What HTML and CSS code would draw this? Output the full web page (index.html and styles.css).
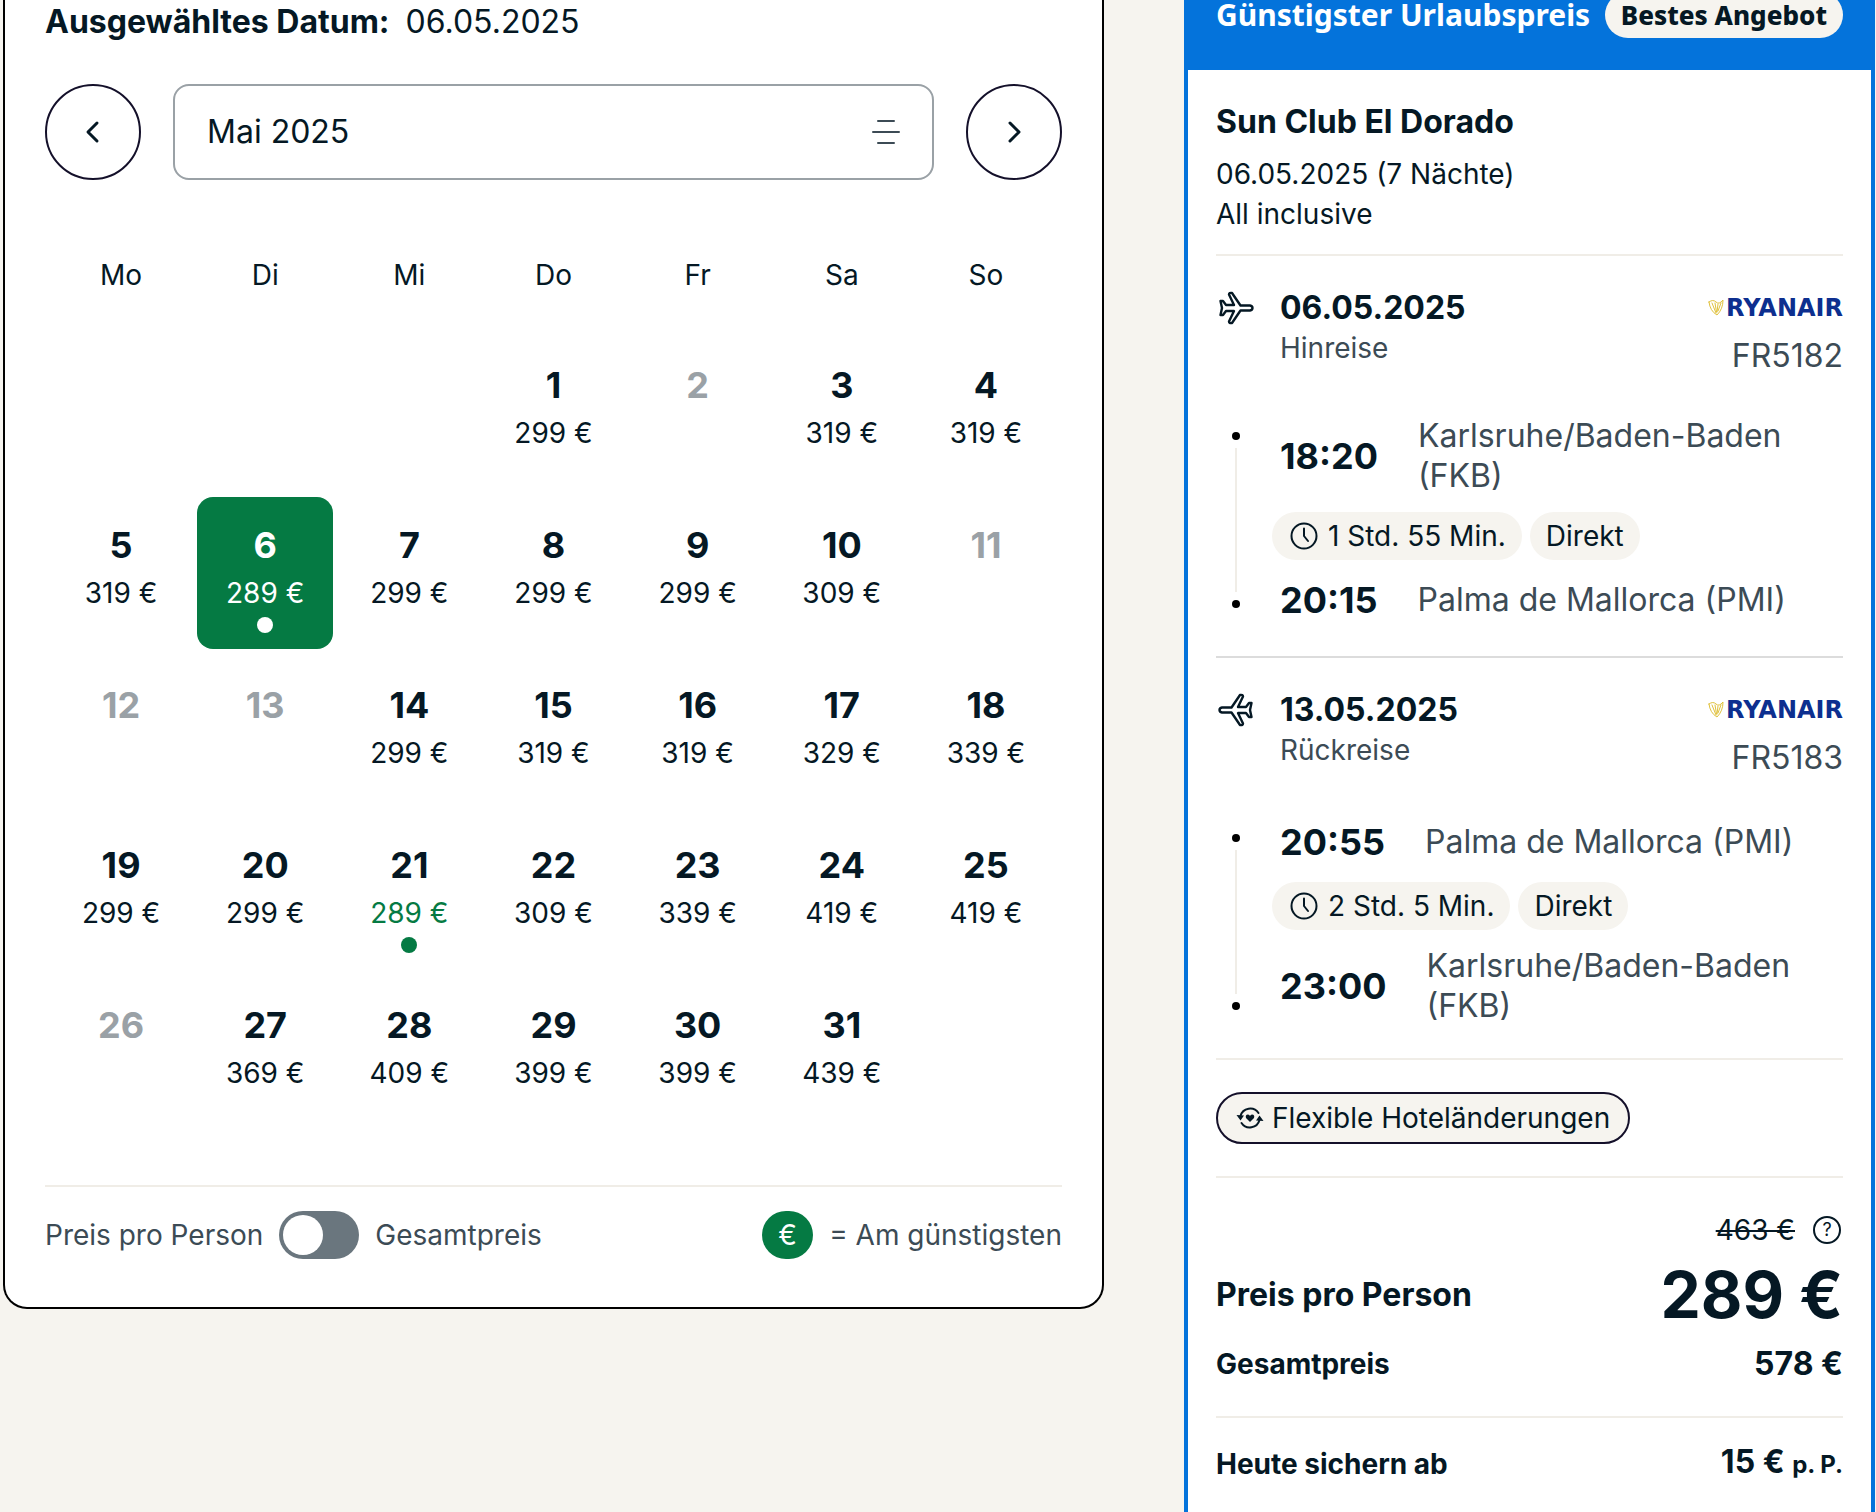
FILE: index.html
```html
<!DOCTYPE html>
<html lang="de">
<head>
<meta charset="utf-8">
<title>Reisedatum und Urlaubspreis</title>
<meta name="viewport" content="width=device-width, initial-scale=1">
<link rel="stylesheet" href="styles.css">
</head>
<body>
<svg class="sprite" aria-hidden="true">
  <symbol id="plane" viewBox="0 0 36 36">
    <path stroke-width="2.4" d="M2.500 11H5l3 4h8L11 4.500q0-2 3-1.500l8.500 12.500H32q2.500 .5 2.500 2.500T32 20.500h-9.500L14 33q-3 .5-3-1.500L16 21H8l-3 4H2.500L4 18z"/>
  </symbol>
  <symbol id="clock" viewBox="0 0 28 28">
    <circle cx="14" cy="14" r="12.500"/><path d="M14 6.500V14l4 5"/>
  </symbol>
  <symbol id="harp" viewBox="0 0 16 18">
    <path d="M1 3q4-3 7 0t7-2q0 9-6 15-7-4-8-13zM4 4l4 10M7 4l1.500 9M10 5l-1 8M13 4l-3 8"/>
  </symbol>
</svg>
<main class="page">
  <section class="calendar">
    <p class="chosen"><strong>Ausgewähltes Datum:</strong><span>06.05.2025</span></p>
    <div class="months">
      <button class="round" type="button" aria-label="Vorheriger Monat"><svg viewBox="0 0 24 24"><path d="M16 3L7 12l9 9"/></svg></button>
      <div class="picker">
        <select class="month" aria-label="Monat"><option>Mai 2025</option></select>
        <svg class="lines" viewBox="0 0 28 28" aria-hidden="true"><path d="M6 3h16M1 14h26M6 25h16"/></svg>
      </div>
      <button class="round" type="button" aria-label="Nächster Monat"><svg viewBox="0 0 24 24"><path d="M8 3l9 9-9 9"/></svg></button>
    </div>
    <table class="days">
      <thead><tr><th>Mo</th><th>Di</th><th>Mi</th><th>Do</th><th>Fr</th><th>Sa</th><th>So</th></tr></thead>
      <tbody>
        <tr><td></td><td></td><td></td>
          <td><button class="day" type="button"><b>1</b><span>299 €</span></button></td>
          <td><button class="day" type="button" disabled><b>2</b></button></td>
          <td><button class="day" type="button"><b>3</b><span>319 €</span></button></td>
          <td><button class="day" type="button"><b>4</b><span>319 €</span></button></td></tr>
        <tr>
          <td><button class="day" type="button"><b>5</b><span>319 €</span></button></td>
          <td><button class="day cheap selected" type="button" aria-pressed="true"><b>6</b><span>289 €</span></button></td>
          <td><button class="day" type="button"><b>7</b><span>299 €</span></button></td>
          <td><button class="day" type="button"><b>8</b><span>299 €</span></button></td>
          <td><button class="day" type="button"><b>9</b><span>299 €</span></button></td>
          <td><button class="day" type="button"><b>10</b><span>309 €</span></button></td>
          <td><button class="day" type="button" disabled><b>11</b></button></td></tr>
        <tr>
          <td><button class="day" type="button" disabled><b>12</b></button></td>
          <td><button class="day" type="button" disabled><b>13</b></button></td>
          <td><button class="day" type="button"><b>14</b><span>299 €</span></button></td>
          <td><button class="day" type="button"><b>15</b><span>319 €</span></button></td>
          <td><button class="day" type="button"><b>16</b><span>319 €</span></button></td>
          <td><button class="day" type="button"><b>17</b><span>329 €</span></button></td>
          <td><button class="day" type="button"><b>18</b><span>339 €</span></button></td></tr>
        <tr>
          <td><button class="day" type="button"><b>19</b><span>299 €</span></button></td>
          <td><button class="day" type="button"><b>20</b><span>299 €</span></button></td>
          <td><button class="day cheap" type="button"><b>21</b><span>289 €</span></button></td>
          <td><button class="day" type="button"><b>22</b><span>309 €</span></button></td>
          <td><button class="day" type="button"><b>23</b><span>339 €</span></button></td>
          <td><button class="day" type="button"><b>24</b><span>419 €</span></button></td>
          <td><button class="day" type="button"><b>25</b><span>419 €</span></button></td></tr>
        <tr>
          <td><button class="day" type="button" disabled><b>26</b></button></td>
          <td><button class="day" type="button"><b>27</b><span>369 €</span></button></td>
          <td><button class="day" type="button"><b>28</b><span>409 €</span></button></td>
          <td><button class="day" type="button"><b>29</b><span>399 €</span></button></td>
          <td><button class="day" type="button"><b>30</b><span>399 €</span></button></td>
          <td><button class="day" type="button"><b>31</b><span>439 €</span></button></td>
          <td></td></tr>
      </tbody>
    </table>
    <div class="legend">
      <div class="mode">
        <label for="total">Preis pro Person</label>
        <input class="switch" id="total" type="checkbox" role="switch">
        <label for="total">Gesamtpreis</label>
      </div>
      <div class="best"><span class="euro">€</span><span>= Am günstigsten</span></div>
    </div>
  </section>

  <aside class="offer">
    <header class="banner"><h2>Günstigster Urlaubspreis</h2><span class="badge">Bestes Angebot</span></header>
    <div class="body">
      <section class="hotel">
        <h3>Sun Club El Dorado</h3>
        <p>06.05.2025 (7 Nächte)</p>
        <p>All inclusive</p>
      </section>
      <section class="flight">
        <div class="top">
          <svg class="plane" aria-hidden="true"><use href="#plane"/></svg>
          <div class="when"><strong>06.05.2025</strong><span>Hinreise</span></div>
          <div class="carrier"><span class="logo"><svg class="harp" aria-hidden="true"><use href="#harp"/></svg>RYANAIR</span><span>FR5182</span></div>
        </div>
        <div class="route">
          <div class="track"><i></i><i></i></div>
          <div class="stops">
            <div class="stop"><strong>18:20</strong><span>Karlsruhe/Baden-Baden (FKB)</span></div>
            <div class="tags"><span class="tag timed"><svg class="clock" aria-hidden="true"><use href="#clock"/></svg>1 Std. 55 Min.</span><span class="tag">Direkt</span></div>
            <div class="stop"><strong>20:15</strong><span>Palma de Mallorca (PMI)</span></div>
          </div>
        </div>
      </section>
      <section class="flight back">
        <div class="top">
          <svg class="plane" aria-hidden="true"><use href="#plane"/></svg>
          <div class="when"><strong>13.05.2025</strong><span>Rückreise</span></div>
          <div class="carrier"><span class="logo"><svg class="harp" aria-hidden="true"><use href="#harp"/></svg>RYANAIR</span><span>FR5183</span></div>
        </div>
        <div class="route">
          <div class="track"><i></i><i></i></div>
          <div class="stops">
            <div class="stop"><strong>20:55</strong><span>Palma de Mallorca (PMI)</span></div>
            <div class="tags"><span class="tag timed"><svg class="clock" aria-hidden="true"><use href="#clock"/></svg>2 Std. 5 Min.</span><span class="tag">Direkt</span></div>
            <div class="stop"><strong>23:00</strong><span>Karlsruhe/Baden-Baden (FKB)</span></div>
          </div>
        </div>
      </section>
      <section class="perks">
        <button class="flex" type="button"><svg viewBox="0 0 28 28" aria-hidden="true"><path class="stroke" d="M4.500 12a10 10 0 0 1 18-3M23.500 16a10 10 0 0 1-18 3"/><path d="M.5 11l7.500 .5L4.500 16.500zM27.500 17l-7.500-.5L23.500 11.500zM14 18l-4-4q-1-3.500 2-3.500 1.500 0 2 1.500 .5-1.500 2-1.500 3 0 2 3.500z"/></svg>Flexible Hoteländerungen</button>
      </section>
      <section class="prices">
        <div class="old"><s>463 €</s><button class="help" type="button" aria-label="Hilfe zum Preis">?</button></div>
        <div class="line main"><span>Preis pro Person</span><strong>289 €</strong></div>
        <div class="line"><span>Gesamtpreis</span><strong>578 €</strong></div>
      </section>
      <section class="deposit">
        <div class="line"><span>Heute sichern ab</span><strong>15 € <small>p. P.</small></strong></div>
      </section>
    </div>
  </aside>
</main>
</body>
</html>
```
FILE: styles.css
```css
:root {
  --ink: #051824;
  --muted: #3c4b55;
  --sand: #f6f4ef;
  --rule: #f0ede7;
  --green: #057a43;
  --blue: #0473db;
}
* { box-sizing: border-box; }
body {
  margin: 0;
  background: var(--sand);
  color: var(--ink);
  font: 28px/40px Inter, "Liberation Sans", sans-serif;
}
h2, h3, p { margin: 0; }
b, strong { font-weight: 700; }
button { padding: 0; border: 0; background: none; color: inherit; font: inherit; cursor: pointer; }
svg { fill: none; stroke: currentColor; stroke-width: 2; stroke-linecap: round; stroke-linejoin: round; }
.sprite { display: none; }

.page {
  display: grid;
  grid-template-columns: minmax(0, 1fr) 691px;
  align-items: start;
  gap: 80px;
  min-height: 100vh;
  padding: 0 1px 0 3px;
}

.calendar {
  padding: 0 40px 48px;
  background: #fff;
  border: 2px solid #000;
  border-top: 0;
  border-radius: 0 0 24px 24px;
}
.chosen { display: flex; gap: 16px; padding: 2px 0 42px; font-size: 32px; }
.months { display: flex; gap: 32px; }
.round {
  display: grid;
  place-items: center;
  width: 96px;
  height: 96px;
  border: 2px solid #14102a;
  border-radius: 50%;
}
.round svg { width: 24px; height: 24px; stroke-width: 3; }
.picker { flex: 1; display: grid; align-items: center; }
.picker > * { grid-area: 1 / 1; }
.month {
  appearance: none;
  width: 100%;
  height: 96px;
  padding: 0 32px;
  border: 2px solid #9aa1a6;
  border-radius: 16px;
  background: #fff;
  color: inherit;
  font: inherit;
  font-size: 32px;
}
.lines { justify-self: end; width: 28px; height: 28px; margin-right: 34px; color: var(--muted); pointer-events: none; }

.days { width: 100%; margin-top: 64px; padding: 0 4px; border-collapse: separate; border-spacing: 0; table-layout: fixed; }
.days th { height: 62px; padding: 0; font-weight: 400; }
.days tbody::before { content: ""; display: block; height: 27px; }
.days td { height: 160px; padding: 4px; vertical-align: middle; }
.day {
  display: flex;
  flex-direction: column;
  align-items: center;
  width: 100%;
  height: 152px;
  padding-top: 24px;
  border-radius: 16px;
}
.day b { font-size: 36px; line-height: 48px; }
.day span { line-height: 48px; }
.day:disabled { color: #9aa1a6; }
.cheap span { color: var(--green); }
.cheap::after { content: ""; width: 16px; height: 16px; border-radius: 50%; background: var(--green); }
.selected { background: var(--green); color: #fff; }
.selected span { color: #fff; }
.selected::after { background: #fff; }

.legend {
  display: flex;
  justify-content: space-between;
  margin-top: 52px;
  padding-top: 24px;
  border-top: 2px solid var(--rule);
  color: var(--muted);
  line-height: 48px;
}
.mode, .best { display: flex; gap: 16px; }
.switch {
  appearance: none;
  width: 80px;
  height: 48px;
  margin: 0;
  padding: 4px;
  border-radius: 24px;
  background: #6a767e;
}
.switch::before { content: ""; display: block; width: 40px; height: 40px; border-radius: 50%; background: #fff; }
.switch:checked::before { margin-left: auto; }
.euro { width: 51px; border-radius: 24px; background: var(--green); color: #fff; text-align: center; }

.offer { min-height: 100vh; background: #fff; border: 4px solid var(--blue); border-width: 0 4px; }
.banner {
  display: flex;
  justify-content: space-between;
  align-items: flex-end;
  height: 70px;
  padding: 0 28px 32px;
  background: var(--blue);
  color: #fff;
  font-family: "Noto Sans", "Open Sans", sans-serif;
}
h2 { font-size: 30px; font-weight: 700; line-height: 46px; white-space: nowrap; }
.badge { padding: 0 16px; border-radius: 24px; background: var(--sand); color: var(--ink); font-size: 26px; font-weight: 800; line-height: 46px; white-space: nowrap; }
.body { padding: 0 28px; }
.body > section { border-bottom: 2px solid var(--rule); }
.hotel { padding: 32px 0 20px; }
.hotel h3 { margin-bottom: 12px; font-size: 32px; line-height: 40px; }
.flight { padding: 32px 0; }
.body > .flight:not(.back) { border-color: #dcdcdc; }
.top { display: flex; }
.plane { width: 36px; height: 36px; margin: 2px 26px 0 2px; }
.back .plane { transform: scaleX(-1); }
.when { display: grid; flex: 1; align-content: start; color: var(--muted); }
.when strong { color: var(--ink); font-size: 32px; }
.carrier { display: grid; justify-items: end; color: var(--muted); font-size: 32px; line-height: 56px; }
.logo { display: flex; align-items: center; gap: 2px; color: #0d2f8f; font: 700 24px/40px "DejaVu Sans", sans-serif; }
.harp { width: 16px; height: 18px; color: #e0c13c; stroke-width: 1; }
.route { display: flex; gap: 40px; margin-top: 32px; }
.track { display: flex; flex-direction: column; justify-content: space-between; align-items: center; width: 8px; margin: 16px 0 16px 16px; background: linear-gradient(var(--rule), var(--rule)) center / 2px calc(100% - 32px) no-repeat; }
.track i { width: 8px; height: 8px; border-radius: 50%; background: #000; }
.stops { flex: 1; }
.stop { display: flex; align-items: center; gap: 40px; min-height: 48px; color: var(--muted); font-size: 32px; }
.stop strong { color: var(--ink); font-size: 36px; }
.tags { display: flex; gap: 8px; margin: 16px 0 16px -8px; }
.tag { padding: 0 16px; border-radius: 24px; background: var(--sand); line-height: 48px; }
.timed { display: flex; align-items: center; gap: 10px; padding-left: 18px; }
.clock { width: 28px; height: 28px; }
.perks { padding: 32px 0; }
.flex { display: flex; align-items: center; gap: 8px; height: 52px; padding: 0 18px; border: 2px solid #14102a; border-radius: 26px; background: var(--sand); }
.flex svg { width: 28px; height: 28px; }
.flex path { fill: currentColor; stroke: none; }
.flex .stroke { fill: none; stroke: currentColor; }
.prices { padding: 32px 0 28px; }
.old { display: flex; justify-content: flex-end; align-items: center; gap: 18px; padding-right: 2px; }
.old s { text-decoration-thickness: 2px; }
.help { width: 28px; height: 28px; border: 2px solid; border-radius: 50%; font-size: 18px; line-height: 24px; }
.line { display: flex; justify-content: space-between; align-items: center; font-weight: 700; line-height: 48px; }
.line strong { font-size: 32px; }
.main { font-size: 32px; line-height: 90px; }
.main strong { font-size: 64px; }
.deposit { padding: 20px 0; }
.body > .deposit { border: 0; }
small { font-size: 24px; }
```
